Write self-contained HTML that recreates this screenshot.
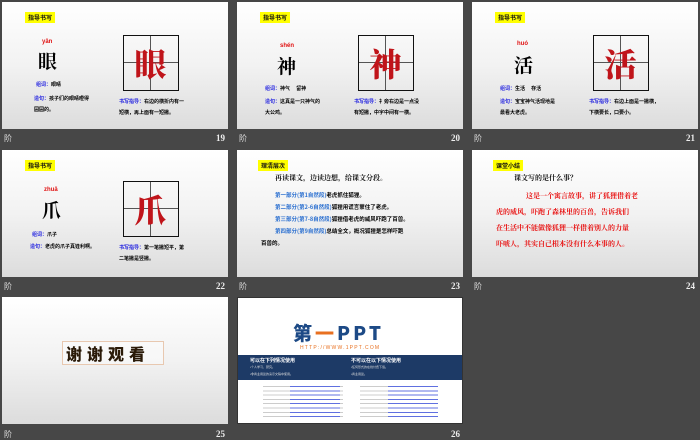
<!DOCTYPE html>
<html><head><meta charset="utf-8"><style>
*{margin:0;padding:0;box-sizing:border-box}
body{width:700px;height:438px;background:#474747;position:relative;overflow:hidden;font-family:"Liberation Sans","Noto Sans CJK SC",sans-serif}
.s{position:absolute;width:226px;height:127px;background:linear-gradient(#fff 0%,#f2f2f2 50%,#dcdcdc 100%);overflow:hidden}
.s *{position:absolute;white-space:nowrap}
.lab{position:absolute;color:#ddd;font-size:8px;font-family:"Liberation Sans","Noto Sans CJK SC",sans-serif}
.num{position:absolute;color:#eee;font-size:9px;font-weight:bold;font-family:"Liberation Serif",serif}
.tag{background:#ffff00;font-size:6px;font-weight:bold;color:#111;padding:1px 3px;font-family:"Noto Sans CJK SC",sans-serif;line-height:9px}
.py{color:#e01010;font-size:6px;font-weight:bold}
.ch{font-family:"Noto Serif CJK SC",serif;font-size:19px;color:#000;font-weight:bold}
.box{left:121px;top:33px;width:56px;height:56px;border:1.5px solid #111}
.box .h{left:0;right:0;top:26px;height:1px;background:#555}
.box .v{top:0;bottom:0;left:26px;width:1px;background:#555}
.box .c{left:0;top:1px;width:53px;text-align:center;font-family:"Noto Serif CJK SC",serif;font-size:32px;font-weight:900;line-height:52px;color:#c0141a}
.t{font-size:5px;color:#000;font-family:"Noto Sans CJK SC",sans-serif;font-weight:bold}
.b{color:#2020e0}
</style></head><body>

<!-- 19 -->
<div class="s" style="left:2px;top:2px">
<div class="tag" style="left:23px;top:10px">指导书写</div>
<div class="py" style="left:40px;top:37px">yǎn</div>
<div class="ch" style="left:36px;top:45px">眼</div>
<div class="t" style="left:34px;top:79px"><span class="b" style="position:static">组词：</span>眼睛</div>
<div class="t" style="left:32px;top:93px"><span class="b" style="position:static">造句：</span>孩子们的眼睛瞪得</div>
<div class="t" style="left:32px;top:104px">圆圆的。</div>
<div class="box"><div class="h"></div><div class="v"></div><div class="c">眼</div></div>
<div class="t" style="left:117px;top:96px"><span class="b" style="position:static">书写指导：</span>右边的横折内有一</div>
<div class="t" style="left:117px;top:107px">短横，再上面有一短撇。</div>
</div>
<div class="lab" style="left:4px;top:133px">阶</div><div class="num" style="left:216px;top:133px">19</div>

<!-- 20 -->
<div class="s" style="left:237px;top:2px">
<div class="tag" style="left:23px;top:10px">指导书写</div>
<div class="py" style="left:43px;top:41px">shén</div>
<div class="ch" style="left:40px;top:50px">神</div>
<div class="t" style="left:28px;top:83px"><span class="b" style="position:static">组词：</span>神气　 留神</div>
<div class="t" style="left:28px;top:96px"><span class="b" style="position:static">造句：</span>这真是一只神气的</div>
<div class="t" style="left:28px;top:107px">大公鸡。</div>
<div class="box"><div class="h"></div><div class="v"></div><div class="c">神</div></div>
<div class="t" style="left:117px;top:96px"><span class="b" style="position:static">书写指导：</span>礻旁右边是一点没</div>
<div class="t" style="left:117px;top:107px">有短撇，中字中间有一横。</div>
</div>
<div class="lab" style="left:239px;top:133px">阶</div><div class="num" style="left:451px;top:133px">20</div>

<!-- 21 -->
<div class="s" style="left:472px;top:2px">
<div class="tag" style="left:23px;top:10px">指导书写</div>
<div class="py" style="left:45px;top:39px">huó</div>
<div class="ch" style="left:42px;top:49px">活</div>
<div class="t" style="left:28px;top:83px"><span class="b" style="position:static">组词：</span>生活　 存活</div>
<div class="t" style="left:28px;top:96px"><span class="b" style="position:static">造句：</span>宝宝神气活现地是</div>
<div class="t" style="left:28px;top:107px">最看大老虎。</div>
<div class="box"><div class="h"></div><div class="v"></div><div class="c">活</div></div>
<div class="t" style="left:117px;top:96px"><span class="b" style="position:static">书写指导：</span>右边上面是一撇横，</div>
<div class="t" style="left:117px;top:107px">下横要长，口要小。</div>
</div>
<div class="lab" style="left:474px;top:133px">阶</div><div class="num" style="left:686px;top:133px">21</div>

<!-- 22 -->
<div class="s" style="left:2px;top:150px">
<div class="tag" style="left:23px;top:10px">指导书写</div>
<div class="py" style="left:42px;top:37px">zhuǎ</div>
<div class="ch" style="left:40px;top:46px">爪</div>
<div class="t" style="left:30px;top:81px"><span class="b" style="position:static">组词：</span>爪子</div>
<div class="t" style="left:28px;top:93px"><span class="b" style="position:static">造句：</span>老虎的爪子真锋利啊。</div>
<div class="box" style="top:31px"><div class="h"></div><div class="v"></div><div class="c">爪</div></div>
<div class="t" style="left:117px;top:94px"><span class="b" style="position:static">书写指导：</span>第一笔撇短平，第</div>
<div class="t" style="left:117px;top:105px">二笔撇是竖撇。</div>
</div>
<div class="lab" style="left:4px;top:281px">阶</div><div class="num" style="left:216px;top:281px">22</div>

<!-- 23 -->
<div class="s" style="left:237px;top:150px">
<div class="tag" style="left:21px;top:10px">理清层次</div>
<div class="t" style="left:38px;top:23px;font-size:7px;color:#111;font-family:'Noto Serif CJK SC',serif">再读课文，边读边想，给课文分段。</div>
<div class="t" style="left:38px;top:41px;font-size:5.5px"><span class="b" style="position:static;color:#2a6fd0">第一部分(第1自然段)</span>老虎抓住狐狸。</div>
<div class="t" style="left:38px;top:53px;font-size:5.5px"><span class="b" style="position:static;color:#2a6fd0">第二部分(第2-6自然段)</span>狐狸用谎言蒙住了老虎。</div>
<div class="t" style="left:38px;top:65px;font-size:5.5px"><span class="b" style="position:static;color:#2a6fd0">第三部分(第7-8自然段)</span>狐狸借老虎的威风吓跑了百兽。</div>
<div class="t" style="left:38px;top:77px;font-size:5.5px"><span class="b" style="position:static;color:#2a6fd0">第四部分(第9自然段)</span>总结全文，概况狐狸是怎样吓跑</div>
<div class="t" style="left:24px;top:89px;font-size:5.5px">百兽的。</div>
</div>
<div class="lab" style="left:239px;top:281px">阶</div><div class="num" style="left:451px;top:281px">23</div>

<!-- 24 -->
<div class="s" style="left:472px;top:150px">
<div class="tag" style="left:21px;top:10px">课堂小结</div>
<div class="t" style="left:42px;top:23px;font-size:7px;color:#111;font-family:'Noto Serif CJK SC',serif">课文写的是什么事？</div>
<div class="t" style="left:54px;top:41px;font-size:7px;color:#e81010;font-family:'Noto Serif CJK SC',serif">这是一个寓言故事，讲了狐狸借着老</div>
<div class="t" style="left:24px;top:57px;font-size:7px;color:#e81010;font-family:'Noto Serif CJK SC',serif">虎的威风，吓跑了森林里的百兽，告诉我们</div>
<div class="t" style="left:24px;top:73px;font-size:7px;color:#e81010;font-family:'Noto Serif CJK SC',serif">在生活中不能做像狐狸一样借着别人的力量</div>
<div class="t" style="left:24px;top:89px;font-size:7px;color:#e81010;font-family:'Noto Serif CJK SC',serif">吓唬人，其实自己根本没有什么本事的人。</div>
</div>
<div class="lab" style="left:474px;top:281px">阶</div><div class="num" style="left:686px;top:281px">24</div>

<!-- 25 -->
<div class="s" style="left:2px;top:297px">
<div style="left:60px;top:44px;width:102px;height:24px;border:1px solid #e8c8b0;background:rgba(255,255,255,.4)"></div>
<div style="left:64px;top:44px;font-size:16px;font-weight:900;color:#2a1a08;letter-spacing:5px;font-family:'Noto Sans CJK SC',sans-serif;line-height:24px">谢谢观看</div>
</div>
<div class="lab" style="left:4px;top:429px">阶</div><div class="num" style="left:216px;top:429px">25</div>

<!-- 26 -->
<div class="s" style="left:237px;top:297px;background:#fff;border:1px solid #333">
<div style="left:55px;top:25px;font-size:19px;font-weight:900;color:#1d4a86;letter-spacing:3px;font-family:'Noto Sans CJK SC',sans-serif;line-height:20px">第<span style="position:static;color:#e87020">一</span>PPT</div>
<div style="left:62px;top:47px;font-size:5px;color:#e87020;letter-spacing:1.2px">HTTP://WWW.1PPT.COM</div>
<div style="left:0;top:57px;width:226px;height:25px;background:#1d3a66"></div>
<div style="left:12px;top:59px;font-size:5px;color:#fff;font-weight:bold">可以在下列情况使用</div>
<div style="left:113px;top:59px;font-size:5px;color:#fff;font-weight:bold">不可以在以下情况使用</div>
<div style="left:12px;top:67px;font-size:3px;color:#ddd">•个人学习、研究。</div>
<div style="left:12px;top:74px;font-size:3px;color:#ddd">•非商业用途的演示文稿中使用。</div>
<div style="left:113px;top:67px;font-size:3px;color:#ddd">•任何形式的在线付费下载。</div>
<div style="left:113px;top:74px;font-size:3px;color:#ddd">•商业用途。</div>
<div style="left:25px;top:86px;width:80px;height:34px;background:repeating-linear-gradient(#fff 0,#fff 2px,#ccc 2px,#ccc 3px,#fff 3px,#fff 4.3px)"></div>
<div style="left:52px;top:86px;width:50px;height:34px;background:repeating-linear-gradient(#fff 0,#fff 2px,#6070e0 2px,#6070e0 3px,#fff 3px,#fff 4.3px)"></div>
<div style="left:122px;top:86px;width:30px;height:34px;background:repeating-linear-gradient(#fff 0,#fff 2px,#ccc 2px,#ccc 3px,#fff 3px,#fff 4.3px)"></div>
<div style="left:150px;top:86px;width:50px;height:34px;background:repeating-linear-gradient(#fff 0,#fff 2px,#6070e0 2px,#6070e0 3px,#fff 3px,#fff 4.3px)"></div>
</div>
<div class="num" style="left:451px;top:429px">26</div>

</body></html>
